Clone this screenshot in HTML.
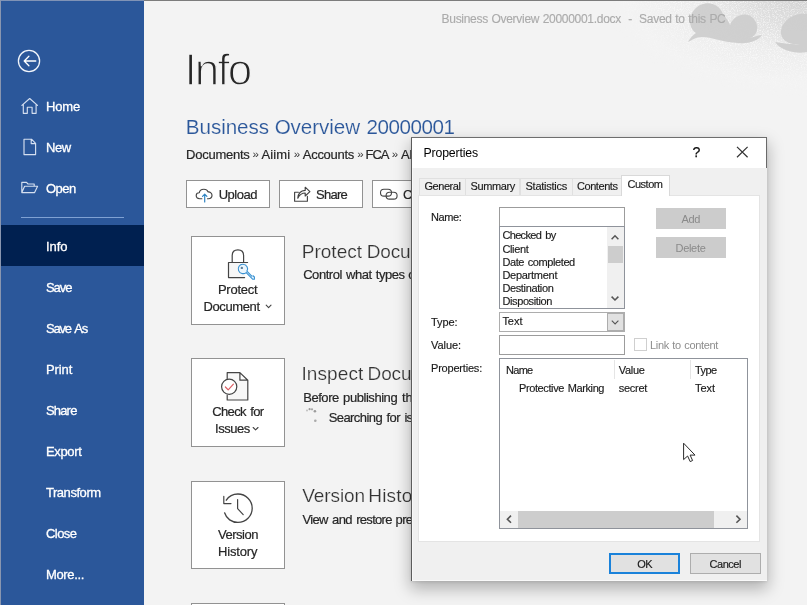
<!DOCTYPE html>
<html>
<head>
<meta charset="utf-8">
<title>Info</title>
<style>
*{box-sizing:border-box;margin:0;padding:0}
html,body{width:807px;height:605px;overflow:hidden}
body{font-family:"Liberation Sans",sans-serif;background:#f3f3f3;position:relative;color:#262626}
.a{position:absolute}
.t{position:absolute;white-space:nowrap;line-height:1}
svg{position:absolute;overflow:visible}
#side{left:1px;top:1px;width:143px;height:604px;background:#2b579a}
#sel{left:1px;top:225px;width:143px;height:41px;background:#002050}
#sep{left:21px;top:216.5px;width:103px;height:1px;background:#7fa1d3}
.btn{position:absolute;height:28px;top:180px;background:#fff;border:1px solid #929292}
.big{position:absolute;left:191px;width:94px;height:88.5px;background:#fff;border:1px solid #929292}
.in{position:absolute;background:#fff;border:1px solid #9c9c9c}
.gb{position:absolute;background:#cccccc}
.tab{position:absolute;top:177.5px;height:18px;background:#f0f0f0;border:1px solid #e0e0e0;border-bottom:none}
</style>
</head>
<body>
<!-- top-right decorative cloud -->
<div class="a" style="left:600px;top:0;width:207px;height:110px;background:radial-gradient(ellipse 175px 82px at 100% 0%,rgba(212,212,212,1) 0%,rgba(220,220,220,.92) 30%,rgba(232,232,232,.6) 62%,rgba(243,243,243,0) 100%)"></div>
<svg width="227" height="110" style="left:580px;top:0" viewBox="0 0 227 110">
  <defs>
    <filter id="nz" x="0" y="0" width="100%" height="100%"><feTurbulence type="fractalNoise" baseFrequency="0.85" numOctaves="2" seed="7" result="n"/><feColorMatrix in="n" type="matrix" values="0 0 0 0 0.96  0 0 0 0 0.96  0 0 0 0 0.96  0 0 0 3.2 -1.45"/></filter>
    <radialGradient id="nm" cx="100%" cy="0%" r="100%" gradientTransform="translate(0.0 0) scale(1 1)"><stop offset="0" stop-color="#fff" stop-opacity=".55"/><stop offset=".55" stop-color="#fff" stop-opacity=".8"/><stop offset=".9" stop-color="#fff" stop-opacity="0"/></radialGradient>
    <mask id="nmk"><rect width="227" height="110" fill="url(#nm)"/></mask>
  </defs>
  <rect width="227" height="110" filter="url(#nz)" mask="url(#nmk)"/>
</svg>
<svg id="cl" width="807" height="100" style="left:0;top:0" viewBox="0 0 807 100">
  <g fill="#cecece" opacity=".95">
    <path d="M688 42 C690 38 693 35 696 33 C688 28 688 14 697 7 C706 0 719 3 723 14 C727 19 729 22 730 25 C734 14 748 11 754 19 C760 27 757 36 750 38 C756 36 760 35 762 35 C758 41 748 44 738 43 C722 42 712 37 702 37 C696 37 692 40 688 42 Z"/>
    <path d="M775 42 C784 43 792 45 800 44 L807 43 L807 52 C798 54 782 52 775 42 Z"/>
    <path d="M807 14 C795 12 782 20 781 31 C780 38 786 43 793 44 L807 44 Z"/>
  </g>
</svg>
<!-- window border -->
<div class="a" style="left:0;top:0;width:807px;height:1px;background:#7c7c7c"></div>
<div class="a" style="left:0;top:0;width:144px;height:1px;background:#8093b6"></div>
<div class="a" style="left:0;top:0;width:1px;height:605px;background:#8996b0"></div>

<!-- sidebar -->
<div id="side" class="a"></div>
<div id="sel" class="a"></div>
<div id="sep" class="a"></div>
<svg width="807" height="605" style="left:0;top:0" viewBox="0 0 807 605" fill="none" stroke="#fff" stroke-width="1.2" stroke-linejoin="round" stroke-linecap="round">
  <!-- back -->
  <circle cx="29" cy="61" r="10.6" stroke-width="1.3" stroke="#f1f5fb"/>
  <path d="M35.8 61 H24.6 M28.9 56.3 L24.2 61 L28.9 65.7" stroke-width="1.3"/>
  <g stroke="#d5dff0" stroke-width="1.15">
  <!-- home -->
  <path d="M21.9 105.4 L29.7 98.5 L37.5 105.4 M23.3 104.4 V113.3 H27.3 V107.2 H32.1 V113.3 H36.1 V104.4"/>
  <!-- new -->
  <path d="M24 139.2 H31.5 L35.6 143.3 V154.6 H24 Z M31.2 139.4 V143.6 H35.4"/>
  <!-- open -->
  <path d="M21.8 192.6 V182.3 H26.5 L28 184 H34.2 V186.2 M21.8 192.6 L24.6 186.2 H37.6 L34.6 192.6 Z"/>
  </g>
</svg>

<!-- command buttons -->
<div class="btn" style="left:186px;width:84px"></div>
<div class="btn" style="left:279px;width:84px"></div>
<div class="btn" style="left:372px;width:84px"></div>
<svg width="807" height="605" style="left:0;top:0" viewBox="0 0 807 605" fill="none" stroke="#444" stroke-width="1.15" stroke-linejoin="round" stroke-linecap="round">
  <!-- upload cloud -->
  <path d="M201.9 198.7 H199.7 C197.6 198.7 196.2 197.3 196.2 195.6 C196.2 193.9 197.5 192.7 199.3 192.7 C199.6 190.6 201.5 189.2 203.9 189.2 C205.9 189.2 207.5 190.3 208.2 191.9 C210.3 191.8 212 193.3 212 195.3 C212 197.2 210.5 198.7 208.4 198.7 H207.5"/>
  <path d="M204.7 202 V194.4 M202.5 196.3 L204.7 194.1 L206.9 196.3" stroke="#2f84c2" stroke-width="1.2"/>
  <!-- share -->
  <path d="M298.4 192.2 H294.6 V201.2 H307.4 V196.4"/>
  <path d="M297.8 198.2 C298.2 193.4 301.2 190.6 305.2 190.4 V187.2 L309.9 191.6 L305.2 196 V193 C301.8 193 299.4 194.8 297.8 198.2 Z"/>
  <!-- link -->
  <rect x="380.5" y="189.3" width="11" height="6.8" rx="3.4" stroke-width="1.1"/>
  <rect x="386.1" y="192.3" width="11" height="6.8" rx="3.4" stroke-width="1.1"/>
</svg>

<!-- big buttons -->
<div class="big" style="top:236px"></div>
<div class="big" style="top:358px"></div>
<div class="big" style="top:481px;height:88px"></div>
<div class="big" style="top:603px"></div>
<svg width="807" height="605" style="left:0;top:0" viewBox="0 0 807 605" fill="none" stroke="#444" stroke-width="1.2" stroke-linejoin="round" stroke-linecap="round">
  <!-- lock -->
  <path d="M232.2 262.2 V255.6 C232.2 252 234.6 249.8 237.9 249.8 C241.2 249.8 243.6 252 243.6 255.6 V262.2"/>
  <path d="M247.6 262.5 H228.5 V277.6 H244.6" fill="#f7f7f7"/>
  <!-- key -->
  <g stroke="#3a92d2" stroke-width="1.15">
   <path d="M246.2 272.6 L252.6 279.2 H254.4 V277 L253 275.8 M246.2 272.6 C243.6 274.6 239.8 273.6 238.6 270.6 C237.4 267.4 239.6 264.2 242.8 264.2 C246.8 264.2 248.8 268.6 246.9 271.2 L251.8 276.2" fill="#ecf6fd"/>
   <circle cx="241.8" cy="267.9" r=".6" fill="#5c7f9c" stroke="#5c7f9c"/>
  </g>
  <!-- doc check -->
  <path d="M227.2 378.4 V372.6 H239.9 L247.8 380.2 V400 H227.2 V395.2 M239.9 372.8 V380.2 H247.6" fill="#f7f7f7"/>
  <circle cx="229.2" cy="386.8" r="7.6" fill="#fff"/>
  <path d="M225.4 387 L228.2 389.8 L233.4 384.2" stroke="#dc5e64" stroke-width="1.2"/>
  <!-- history -->
  <path d="M224.6 512.8 C226.4 518.8 231.8 522.4 237.9 522.4 C245.8 522.4 252.2 516 252.2 508.2 C252.2 500.4 245.8 494 237.9 494 C233 494 228.7 496.4 226.3 500.2" stroke-width="1.3"/>
  <path d="M223.8 496.4 V503.6 H231"/>
  <path d="M237.6 499.6 V508.6 L243.2 514.6"/>
  <!-- dropdown chevrons -->
  <path d="M266.2 305.2 L268.6 307.6 L271 305.2 M253.2 427.5 L255.6 429.9 L258 427.5" stroke-width="1.1"/>
</svg>
<!-- spinner -->
<svg width="807" height="605" style="left:0;top:0" viewBox="0 0 807 605" fill="#9c9c9c">
  <circle cx="307" cy="410.4" r="1" opacity=".6"/><circle cx="309.6" cy="409.2" r="1.1"/><circle cx="312" cy="409.3" r="1.1" opacity=".9"/><circle cx="314.9" cy="411.2" r="1.3"/><circle cx="315.3" cy="420.8" r="1.3" opacity=".85"/>
</svg>

<div class="a" style="left:0;top:0;width:807px;height:605px;will-change:transform">
<div class="t" style="left:45.9px;top:99.7px;font-size:13px;color:#ffffff;letter-spacing:-0.10px;-webkit-text-stroke:0.3px #fff;">Home</div>
<div class="t" style="left:45.9px;top:140.7px;font-size:13px;color:#ffffff;letter-spacing:-0.34px;-webkit-text-stroke:0.3px #fff;">New</div>
<div class="t" style="left:45.9px;top:181.7px;font-size:13px;color:#ffffff;letter-spacing:-0.50px;-webkit-text-stroke:0.3px #fff;">Open</div>
<div class="t" style="left:45.9px;top:239.7px;font-size:13px;color:#ffffff;-webkit-text-stroke:0.3px #fff;">Info</div>
<div class="t" style="left:45.9px;top:280.7px;font-size:13px;color:#ffffff;letter-spacing:-0.99px;-webkit-text-stroke:0.3px #fff;">Save</div>
<div class="t" style="left:45.9px;top:321.7px;font-size:13px;color:#ffffff;letter-spacing:-1.14px;word-spacing:1.60px;-webkit-text-stroke:0.3px #fff;">Save As</div>
<div class="t" style="left:45.9px;top:362.7px;font-size:13px;color:#ffffff;letter-spacing:-0.09px;-webkit-text-stroke:0.3px #fff;">Print</div>
<div class="t" style="left:45.9px;top:403.7px;font-size:13px;color:#ffffff;letter-spacing:-0.80px;-webkit-text-stroke:0.3px #fff;">Share</div>
<div class="t" style="left:45.9px;top:444.7px;font-size:13px;color:#ffffff;letter-spacing:-0.33px;-webkit-text-stroke:0.3px #fff;">Export</div>
<div class="t" style="left:45.9px;top:485.7px;font-size:13px;color:#ffffff;letter-spacing:-0.44px;-webkit-text-stroke:0.3px #fff;">Transform</div>
<div class="t" style="left:45.9px;top:526.7px;font-size:13px;color:#ffffff;letter-spacing:-0.51px;-webkit-text-stroke:0.3px #fff;">Close</div>
<div class="t" style="left:45.9px;top:567.7px;font-size:13px;color:#ffffff;letter-spacing:-0.31px;-webkit-text-stroke:0.3px #fff;">More...</div>
<div class="t" style="left:184.5px;top:48.1px;font-size:44px;color:#262626;letter-spacing:-1.85px;-webkit-text-stroke:1.4px #f3f3f3;">Info</div>
<div class="t" style="left:185.8px;top:117.2px;font-size:20.6px;color:#2b579a;letter-spacing:-0.05px;-webkit-text-stroke:0.15px #f3f3f3;">Business Overview</div>
<div class="t" style="left:366.6px;top:117.2px;font-size:20.6px;color:#2b579a;letter-spacing:-0.48px;-webkit-text-stroke:0.15px #f3f3f3;">20000001</div>
<div class="t" style="left:186.1px;top:147.5px;font-size:13px;color:#262626;letter-spacing:-0.26px;-webkit-text-stroke:0.2px #262626;">Documents</div>
<div class="t" style="left:252.6px;top:148.6px;font-size:11.5px;color:#333333;letter-spacing:-1.01px;">»</div>
<div class="t" style="left:261.4px;top:147.5px;font-size:13px;color:#262626;letter-spacing:0.17px;-webkit-text-stroke:0.2px #262626;">Aiimi</div>
<div class="t" style="left:293.8px;top:148.6px;font-size:11.5px;color:#333333;letter-spacing:-1.01px;">»</div>
<div class="t" style="left:302.8px;top:147.5px;font-size:13px;color:#262626;letter-spacing:-0.29px;-webkit-text-stroke:0.2px #262626;">Accounts</div>
<div class="t" style="left:357.3px;top:148.6px;font-size:11.5px;color:#333333;letter-spacing:-1.01px;">»</div>
<div class="t" style="left:365.5px;top:147.5px;font-size:13px;color:#262626;letter-spacing:-1.00px;-webkit-text-stroke:0.2px #262626;">FCA</div>
<div class="t" style="left:391.7px;top:148.6px;font-size:11.5px;color:#333333;letter-spacing:-1.01px;">»</div>
<div class="t" style="left:401.0px;top:147.5px;font-size:13px;color:#262626;letter-spacing:-0.28px;-webkit-text-stroke:0.2px #262626;">Al</div>
<div class="t" style="left:441.6px;top:12.7px;font-size:12px;color:#ababab;letter-spacing:-0.30px;word-spacing:0.59px;-webkit-text-stroke:0.15px #ababab;">Business Overview 20000001.docx&nbsp; -&nbsp; Saved to this PC</div>
<div class="t" style="left:218.7px;top:187.9px;font-size:13px;color:#262626;letter-spacing:-0.50px;-webkit-text-stroke:0.2px #262626;">Upload</div>
<div class="t" style="left:316.1px;top:187.9px;font-size:13px;color:#262626;letter-spacing:-0.76px;-webkit-text-stroke:0.2px #262626;">Share</div>
<div class="t" style="left:403.0px;top:187.9px;font-size:13px;color:#262626;letter-spacing:-0.89px;-webkit-text-stroke:0.2px #262626;">C</div>
<div class="t" style="left:217.9px;top:283.2px;font-size:13px;color:#262626;letter-spacing:-0.24px;-webkit-text-stroke:0.2px #262626;">Protect</div>
<div class="t" style="left:203.5px;top:299.7px;font-size:13px;color:#262626;letter-spacing:-0.39px;-webkit-text-stroke:0.2px #262626;">Document</div>
<div class="t" style="left:212.3px;top:405.4px;font-size:13px;color:#262626;letter-spacing:-0.66px;word-spacing:1.48px;-webkit-text-stroke:0.2px #262626;">Check for</div>
<div class="t" style="left:215.0px;top:422.0px;font-size:13px;color:#262626;letter-spacing:-0.46px;-webkit-text-stroke:0.2px #262626;">Issues</div>
<div class="t" style="left:218.0px;top:528.4px;font-size:13px;color:#262626;letter-spacing:-0.50px;-webkit-text-stroke:0.2px #262626;">Version</div>
<div class="t" style="left:217.9px;top:545.0px;font-size:13px;color:#262626;letter-spacing:-0.14px;-webkit-text-stroke:0.2px #262626;">History</div>
<div class="t" style="left:301.8px;top:242.3px;font-size:19px;color:#333333;-webkit-text-stroke:0.2px #f3f3f3;">Protect</div>
<div class="t" style="left:366.8px;top:242.3px;font-size:19px;color:#333333;letter-spacing:-0.16px;-webkit-text-stroke:0.2px #f3f3f3;">Docu</div>
<div class="t" style="left:303.2px;top:268.1px;font-size:13px;color:#262626;letter-spacing:-0.46px;word-spacing:1.03px;-webkit-text-stroke:0.2px #262626;">Control what types</div>
<div class="t" style="left:408.2px;top:268.1px;font-size:13px;color:#262626;letter-spacing:-0.70px;-webkit-text-stroke:0.2px #262626;">c</div>
<div class="t" style="left:301.5px;top:363.9px;font-size:19px;color:#333333;letter-spacing:0.08px;-webkit-text-stroke:0.2px #f3f3f3;">Inspect</div>
<div class="t" style="left:367.6px;top:363.9px;font-size:19px;color:#333333;letter-spacing:-0.16px;-webkit-text-stroke:0.2px #f3f3f3;">Docu</div>
<div class="t" style="left:303.2px;top:391.3px;font-size:13px;color:#262626;letter-spacing:-0.45px;word-spacing:1.16px;-webkit-text-stroke:0.2px #262626;">Before publishing</div>
<div class="t" style="left:402.0px;top:391.3px;font-size:13px;color:#262626;letter-spacing:-0.17px;-webkit-text-stroke:0.2px #262626;">th</div>
<div class="t" style="left:328.7px;top:410.7px;font-size:13px;color:#262626;letter-spacing:-0.57px;word-spacing:1.39px;-webkit-text-stroke:0.2px #262626;">Searching for</div>
<div class="t" style="left:404.5px;top:410.7px;font-size:13px;color:#262626;letter-spacing:-0.95px;-webkit-text-stroke:0.2px #262626;">is</div>
<div class="t" style="left:302.3px;top:486.1px;font-size:19px;color:#333333;letter-spacing:-0.11px;-webkit-text-stroke:0.2px #f3f3f3;">Version</div>
<div class="t" style="left:368.3px;top:486.1px;font-size:19px;color:#333333;letter-spacing:0.18px;-webkit-text-stroke:0.2px #f3f3f3;">Histo</div>
<div class="t" style="left:302.5px;top:513.3px;font-size:13px;color:#262626;letter-spacing:-0.69px;word-spacing:1.51px;-webkit-text-stroke:0.2px #262626;">View and restore</div>
<div class="t" style="left:395.5px;top:513.3px;font-size:13px;color:#262626;letter-spacing:-0.60px;-webkit-text-stroke:0.2px #262626;">pre</div>
</div>

<!-- ============ dialog ============ -->
<div class="a" style="left:411px;top:137px;width:356px;height:444px;background:#f0f0f0;box-shadow:0 7px 15px 1px rgba(0,0,0,.27),0 1px 3px rgba(0,0,0,.10)"></div>
<div class="a" style="left:411px;top:137px;width:1px;height:444px;background:#5c5c5c"></div>
<div class="a" style="left:411px;top:137px;width:356px;height:1px;background:#6e6e6e"></div>
<div class="a" style="left:766px;top:137px;width:1px;height:31px;background:#6a6a6a"></div>
<div class="a" style="left:412px;top:138px;width:354px;height:30px;background:#fff"></div>
<div class="a" style="left:412px;top:168px;width:1px;height:413px;background:#f8f8f8"></div>
<div class="a" style="left:412px;top:580px;width:355px;height:1px;background:#fafafa"></div>
<!-- close X -->
<svg width="807" height="605" style="left:0;top:0" viewBox="0 0 807 605" fill="none" stroke="#333" stroke-width="1.1">
  <path d="M737 146.9 L747.6 157.3 M747.6 146.9 L737 157.3" stroke-width="1.2"/>
</svg>
<!-- tabs -->
<div class="tab" style="left:419px;width:47px"></div>
<div class="tab" style="left:465px;width:55px"></div>
<div class="tab" style="left:519.5px;width:53px"></div>
<div class="tab" style="left:572px;width:50px"></div>
<div class="a" style="left:418px;top:195px;width:342px;height:347px;background:#fff;border:1px solid #e4e4e4"></div>
<div class="a" style="left:621px;top:175px;width:48.5px;height:21px;background:#fff;border:1px solid #d9d9d9;border-bottom:none"></div>
<!-- inputs -->
<div class="in" style="left:499px;top:207px;width:126px;height:20px"></div>
<div class="in" style="left:499px;top:226px;width:126px;height:83px;border-color:#8f939b"></div>
<div class="a" style="left:607px;top:227px;width:17px;height:81px;background:#f0f0f0"></div>
<div class="a" style="left:607.5px;top:246px;width:15px;height:16.5px;background:#cdcdcd"></div>
<div class="in" style="left:499px;top:312px;width:126px;height:20px;border-color:#adadad"></div>
<div class="a" style="left:607px;top:313px;width:17px;height:18px;background:#e1e1e1;border:1px solid #adadad"></div>
<div class="in" style="left:499px;top:335px;width:126px;height:20px"></div>
<div class="a" style="left:634px;top:338px;width:13px;height:13px;background:#fff;border:1px solid #cfcfcf"></div>
<!-- buttons disabled -->
<div class="gb" style="left:655.5px;top:208px;width:70.5px;height:21px"></div>
<div class="gb" style="left:655.5px;top:237px;width:70.5px;height:21px"></div>
<!-- list view -->
<div class="in" style="left:499px;top:358px;width:249px;height:171px;border-color:#8f939b"></div>
<div class="a" style="left:614px;top:360px;width:1px;height:19px;background:#e5e5e5"></div>
<div class="a" style="left:689.5px;top:360px;width:1px;height:19px;background:#e5e5e5"></div>
<div class="a" style="left:500px;top:511px;width:247px;height:17px;background:#f0f0f0"></div>
<div class="a" style="left:518px;top:511px;width:195.5px;height:17px;background:#cdcdcd"></div>
<svg width="807" height="605" style="left:0;top:0" viewBox="0 0 807 605" fill="none" stroke="#555" stroke-width="1.5">
  <path d="M611.6 239.2 L615 235.8 L618.4 239.2"/>
  <path d="M611.6 296.6 L615 300 L618.4 296.6"/>
  <path d="M611.8 320.6 L615.1 323.9 L618.4 320.6" stroke-width="1.1"/>
  <path d="M511 515.6 L507.4 519.2 L511 522.8" stroke-width="1.6"/>
  <path d="M736.4 515.6 L740 519.2 L736.4 522.8" stroke-width="1.6"/>
</svg>
<!-- OK / Cancel -->
<div class="a" style="left:609px;top:553px;width:70.5px;height:20.5px;background:#e1e1e1;border:2px solid #1a82da"></div>
<div class="a" style="left:690px;top:553px;width:70.5px;height:20.5px;background:#e1e1e1;border:1px solid #adadad"></div>

<div class="t" style="left:423.5px;top:146.9px;font-size:12.3px;color:#000000;letter-spacing:-0.15px;">Properties</div>
<div class="t" style="left:692.6px;top:145.2px;font-size:14.2px;color:#111111;-webkit-text-stroke:0.25px #111;">?</div>
<div class="t" style="left:424.5px;top:181.2px;font-size:11px;color:#1a1a1a;letter-spacing:-0.45px;-webkit-text-stroke:0.15px #1a1a1a;">General</div>
<div class="t" style="left:470.5px;top:181.2px;font-size:11px;color:#1a1a1a;letter-spacing:-0.37px;-webkit-text-stroke:0.15px #1a1a1a;">Summary</div>
<div class="t" style="left:525.5px;top:181.2px;font-size:11px;color:#1a1a1a;letter-spacing:-0.25px;-webkit-text-stroke:0.15px #1a1a1a;">Statistics</div>
<div class="t" style="left:577.0px;top:181.2px;font-size:11px;color:#1a1a1a;letter-spacing:-0.44px;-webkit-text-stroke:0.15px #1a1a1a;">Contents</div>
<div class="t" style="left:627.5px;top:179.1px;font-size:11px;color:#1a1a1a;letter-spacing:-0.48px;-webkit-text-stroke:0.15px #1a1a1a;">Custom</div>
<div class="t" style="left:431.0px;top:211.7px;font-size:11px;color:#1a1a1a;letter-spacing:-0.38px;-webkit-text-stroke:0.15px #1a1a1a;">Name:</div>
<div class="t" style="left:431.0px;top:316.7px;font-size:11px;color:#1a1a1a;letter-spacing:-0.08px;-webkit-text-stroke:0.15px #1a1a1a;">Type:</div>
<div class="t" style="left:431.0px;top:339.7px;font-size:11px;color:#1a1a1a;letter-spacing:-0.06px;-webkit-text-stroke:0.15px #1a1a1a;">Value:</div>
<div class="t" style="left:431.0px;top:362.7px;font-size:11px;color:#1a1a1a;letter-spacing:-0.20px;-webkit-text-stroke:0.15px #1a1a1a;">Properties:</div>
<div class="t" style="left:502.4px;top:230.2px;font-size:11px;color:#1a1a1a;letter-spacing:-0.65px;word-spacing:1.50px;-webkit-text-stroke:0.15px #1a1a1a;">Checked by</div>
<div class="t" style="left:502.4px;top:243.5px;font-size:11px;color:#1a1a1a;letter-spacing:-0.34px;-webkit-text-stroke:0.15px #1a1a1a;">Client</div>
<div class="t" style="left:502.4px;top:256.7px;font-size:11px;color:#1a1a1a;letter-spacing:-0.40px;word-spacing:1.00px;-webkit-text-stroke:0.15px #1a1a1a;">Date completed</div>
<div class="t" style="left:502.4px;top:269.9px;font-size:11px;color:#1a1a1a;letter-spacing:-0.27px;-webkit-text-stroke:0.15px #1a1a1a;">Department</div>
<div class="t" style="left:502.4px;top:283.1px;font-size:11px;color:#1a1a1a;letter-spacing:-0.36px;-webkit-text-stroke:0.15px #1a1a1a;">Destination</div>
<div class="t" style="left:502.4px;top:296.1px;font-size:11px;color:#1a1a1a;letter-spacing:-0.38px;-webkit-text-stroke:0.15px #1a1a1a;">Disposition</div>
<div class="t" style="left:502.4px;top:316.3px;font-size:11px;color:#1a1a1a;letter-spacing:-0.02px;-webkit-text-stroke:0.15px #1a1a1a;">Text</div>
<div class="t" style="left:681.5px;top:213.5px;font-size:11px;color:#8a8a8a;letter-spacing:-0.36px;">Add</div>
<div class="t" style="left:675.5px;top:243.1px;font-size:11px;color:#8a8a8a;letter-spacing:-0.30px;">Delete</div>
<div class="t" style="left:650.0px;top:339.7px;font-size:11px;color:#8d8d8d;letter-spacing:-0.33px;word-spacing:0.71px;">Link to content</div>
<div class="t" style="left:506.0px;top:364.7px;font-size:11px;color:#1a1a1a;letter-spacing:-0.71px;-webkit-text-stroke:0.15px #1a1a1a;">Name</div>
<div class="t" style="left:618.8px;top:364.7px;font-size:11px;color:#1a1a1a;letter-spacing:-0.33px;-webkit-text-stroke:0.15px #1a1a1a;">Value</div>
<div class="t" style="left:695.0px;top:364.7px;font-size:11px;color:#1a1a1a;letter-spacing:-0.59px;-webkit-text-stroke:0.15px #1a1a1a;">Type</div>
<div class="t" style="left:519.0px;top:382.7px;font-size:11px;color:#1a1a1a;letter-spacing:-0.39px;word-spacing:1.02px;-webkit-text-stroke:0.15px #1a1a1a;">Protective Marking</div>
<div class="t" style="left:618.8px;top:382.7px;font-size:11px;color:#1a1a1a;letter-spacing:-0.29px;-webkit-text-stroke:0.15px #1a1a1a;">secret</div>
<div class="t" style="left:695.0px;top:382.7px;font-size:11px;color:#1a1a1a;letter-spacing:-0.05px;-webkit-text-stroke:0.15px #1a1a1a;">Text</div>
<div class="t" style="left:637.3px;top:559.0px;font-size:11px;color:#1a1a1a;letter-spacing:-0.60px;-webkit-text-stroke:0.15px #1a1a1a;">OK</div>
<div class="t" style="left:709.5px;top:559.0px;font-size:11px;color:#1a1a1a;letter-spacing:-0.46px;-webkit-text-stroke:0.15px #1a1a1a;">Cancel</div>

<!-- cursor -->
<svg width="807" height="605" style="left:0;top:0" viewBox="0 0 807 605">
  <path d="M683.6 443.2 V459.6 L687.6 456 L690.2 461.6 L692.6 460.5 L690.1 455.1 H695 Z" fill="#fff" stroke="#2a2a2a" stroke-width="1" stroke-linejoin="round"/>
</svg>
</body>
</html>
